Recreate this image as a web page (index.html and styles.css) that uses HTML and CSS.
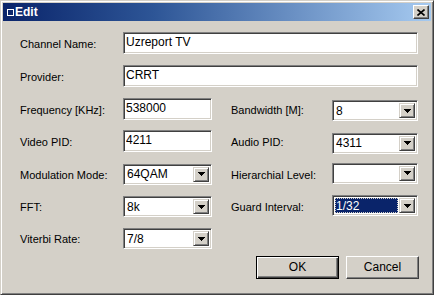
FILE: index.html
```html
<!DOCTYPE html>
<html lang="en">
<head>
    <meta charset="UTF-8">
    <title>Edit</title>
    <link rel="stylesheet" href="styles.css">
</head>
<body>
    <div class="window">
        <div class="titlebar">
            <span class="title"><span class="title-icon"></span>Edit</span>
            <span class="close-btn">
                <svg width="8" height="7" viewBox="0 0 8 7"><path d="M0.5 0.5 L7.5 6.5 M7.5 0.5 L0.5 6.5" stroke="#000" stroke-width="1.6" fill="none"/></svg>
            </span>
        </div>
        <div class="form">
            <label class="lbl">Channel Name:</label>
            <input type="text" class="edit wide" value="Uzreport TV">

            <label class="lbl">Provider:</label>
            <input type="text" class="edit wide" value="CRRT">

            <label class="lbl">Frequency [KHz]:</label>
            <input type="text" class="edit" value="538000">
            <label class="lbl-right">Bandwidth [M]:</label>
            <div class="combo combo-r1"><span class="combo-value">8</span><span class="combo-btn"><svg width="7" height="4"><polygon points="0,0 7,0 3.5,4"/></svg></span></div>

            <label class="lbl">Video PID:</label>
            <input type="text" class="edit" value="4211">
            <label class="lbl-right">Audio PID:</label>
            <div class="combo combo-r1"><span class="combo-value">4311</span><span class="combo-btn"><svg width="7" height="4"><polygon points="0,0 7,0 3.5,4"/></svg></span></div>

            <label class="lbl">Modulation Mode:</label>
            <div class="combo"><span class="combo-value">64QAM</span><span class="combo-btn"><svg width="7" height="4"><polygon points="0,0 7,0 3.5,4"/></svg></span></div>
            <label class="lbl-right">Hierarchial Level:</label>
            <div class="combo combo-r2"><span class="combo-value"></span><span class="combo-btn"><svg width="7" height="4"><polygon points="0,0 7,0 3.5,4"/></svg></span></div>

            <label class="lbl">FFT:</label>
            <div class="combo"><span class="combo-value">8k</span><span class="combo-btn"><svg width="7" height="4"><polygon points="0,0 7,0 3.5,4"/></svg></span></div>
            <label class="lbl-right">Guard Interval:</label>
            <div class="combo combo-r2"><span class="combo-value selected">1/32</span><span class="combo-btn"><svg width="7" height="4"><polygon points="0,0 7,0 3.5,4"/></svg></span></div>

            <label class="lbl">Viterbi Rate:</label>
            <div class="combo"><span class="combo-value">7/8</span><span class="combo-btn"><svg width="7" height="4"><polygon points="0,0 7,0 3.5,4"/></svg></span></div>
        </div>
        <div class="buttons">
            <button type="button" class="btn btn-default">OK</button>
            <button type="button" class="btn">Cancel</button>
        </div>
    </div>
</body>
</html>
```

FILE: styles.css
```css
body {
    margin: 0;
    padding: 0;
    background-color: #d4d0c8;
    font-family: "Liberation Sans", Arial, sans-serif;
    font-size: 11px;
    color: #000;
}

.window {
    width: 434px;
    height: 295px;
    box-sizing: border-box;
    background-color: #d4d0c8;
    border: 1px solid;
    border-color: #d4d0c8 #404040 #404040 #d4d0c8;
    box-shadow: inset 1px 1px #fff, inset -1px -1px #808080;
    padding: 2px;
}

.titlebar {
    height: 18px;
    display: flex;
    align-items: center;
    justify-content: space-between;
    padding: 0 2px 0 4px;
    background: linear-gradient(to right, #0a246a, #2d5596 35%, #a6caf0);
    color: #fff;
}

.title {
    display: flex;
    align-items: center;
    font-weight: bold;
    font-size: 12px;
}

.title-icon {
    width: 5px;
    height: 5px;
    border: 1px solid #fff;
    margin-right: 1px;
}

.close-btn {
    width: 16px;
    height: 14px;
    box-sizing: border-box;
    display: flex;
    align-items: center;
    justify-content: center;
    background-color: #d4d0c8;
    border: 1px solid;
    border-color: #fff #404040 #404040 #fff;
    box-shadow: inset -1px -1px #808080;
}

.form {
    display: grid;
    grid-template-columns: 103px 89px 19px 101px 86px;
    grid-template-rows: 33px 33px 33px 32px 33px 32px 32px;
    align-items: center;
    padding: 5px 0 0 17px;
}

.lbl {
    grid-column: 1;
    padding-top: 2px;
}

.lbl-right {
    grid-column: 4;
    padding-top: 2px;
}

.edit {
    height: 22px;
    box-sizing: border-box;
    margin: 0;
    padding: 0 2px 2px;
    font-family: inherit;
    font-size: 12px;
    color: #000;
    background-color: #fff;
    border: 1px solid;
    border-color: #808080 #fff #fff #808080;
    box-shadow: inset 1px 1px #404040, inset -1px -1px #d4d0c8;
    outline: none;
}

.wide {
    grid-column: 2 / 6;
}

.combo {
    height: 21px;
    box-sizing: border-box;
    display: flex;
    background-color: #fff;
    border: 1px solid;
    border-color: #808080 #fff #fff #808080;
    box-shadow: inset 1px 1px #404040, inset -1px -1px #d4d0c8;
    padding: 2px;
    margin-top: 1px;
}

.combo-r1 {
    margin-top: 4px;
}

.combo-r2 {
    margin-top: -1px;
}

.combo-value {
    flex: 1;
    display: flex;
    align-items: center;
    padding-left: 1px;
    font-size: 12px;
    margin-right: 1px;
}

.combo-value.selected {
    background-color: #0a246a;
    color: #fff;
    outline: 1px dotted #d4d0c8;
    outline-offset: -1px;
}

.combo-btn {
    width: 16px;
    box-sizing: border-box;
    display: flex;
    align-items: center;
    justify-content: center;
    background-color: #d4d0c8;
    border: 1px solid;
    border-color: #d4d0c8 #404040 #404040 #d4d0c8;
    box-shadow: inset 1px 1px #fff, inset -1px -1px #808080;
}

.combo-btn svg {
    display: block;
    fill: #000;
    shape-rendering: crispEdges;
}

.buttons {
    display: flex;
    justify-content: flex-end;
    align-items: center;
    gap: 7px;
    padding: 2px 12px 0 0;
}

.btn {
    height: 23px;
    width: 73px;
    box-sizing: border-box;
    margin: 0;
    padding: 0 0 1px;
    font-family: inherit;
    font-size: 12px;
    color: #000;
    background-color: #d4d0c8;
    border: 1px solid;
    border-color: #fff #404040 #404040 #fff;
    box-shadow: inset -1px -1px #808080, inset 1px 1px #d4d0c8;
}

.btn-default {
    width: 83px;
    border: 1px solid #000;
    box-shadow: inset 1px 1px #fff, inset -1px -1px #404040, inset -2px -2px #808080;
}
```
